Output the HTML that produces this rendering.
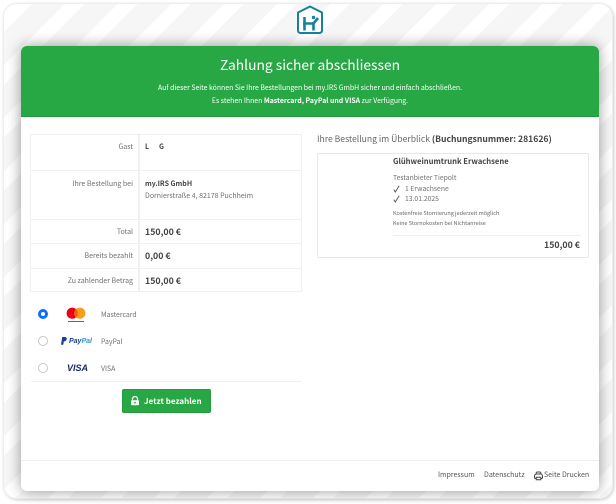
<!DOCTYPE html>
<html><head><meta charset="utf-8">
<style>
*{box-sizing:border-box}
html,body{margin:0;padding:0;width:616px;height:504px;overflow:hidden;background:#fff}
body{font-family:"Noto Sans CJK JP","Liberation Sans",sans-serif;color:#555;position:relative}
.a{position:absolute;white-space:nowrap;line-height:1}
#outer{position:absolute;left:3px;top:3px;width:610px;height:496px;border-radius:14px;border:1px solid #eeeeee;box-shadow:1px 1px 3px rgba(0,0,0,.2);overflow:hidden;
background:repeating-linear-gradient(135deg,#f6f6f6 0 5.6px,#fff 5.6px 19.6px,#f6f6f6 19.6px 37.5px)}
#inner{position:absolute;left:21px;top:46px;width:578px;height:445px;background:#fff;border-radius:6px;box-shadow:0 0 14px rgba(0,0,0,.4)}
#hd{position:absolute;left:21px;top:46px;width:578px;height:71px;background:#28a745;border-radius:6px 6px 0 0;border-bottom:1px solid #1f9a3c}
.c{text-align:center;color:#fff;left:21px;width:578px}
.line{position:absolute;background:#f0f0f0}
.r{text-align:right;left:30px;width:103px;font-size:7px;color:#6f6f6f}
.v{left:145px;font-weight:700;color:#444}
.rad{position:absolute;left:38px;width:10px;height:10px;border-radius:50%;border:1px solid #c8c8c8;background:#fff}
</style></head><body>
<div id="outer"></div>
<div id="inner"></div>
<svg class="a" style="left:296px;top:5px" width="28" height="30" viewBox="0 0 28 30"><path d="M14 1.500L26 7.500V25.500a2.500 2.500 0 0 1-2.500 2.500H4.500a2.500 2.500 0 0 1-2.500-2.500V7.500Z" fill="#fff" stroke="#17809d" stroke-width="2" stroke-linejoin="round"/><path d="M8.500 12V25.500M17.500 17V25.500M7 18.500H17.500L22 13" fill="none" stroke="#17809d" stroke-width="2.600"/><circle cx="17.500" cy="12.500" r="1.700" fill="#17809d"/></svg>
<div id="hd"></div>
<div class="a c" style="top:58px;font-size:13.8px">Zahlung sicher abschliessen</div>
<div class="a c" style="top:84px;font-size:6.9px">Auf dieser Seite können Sie Ihre Bestellungen bei my.IRS GmbH sicher und einfach abschließen.</div>
<div class="a c" style="top:97px;font-size:6.9px">Es stehen Ihnen <b>Mastercard, PayPal und VISA</b> zur Verfügung.</div>

<div style="position:absolute;left:30px;top:134px;width:272px;height:158px;border:1px solid #f0f0f0"></div>
<div class="line" style="left:138px;top:134px;width:2px;height:158px"></div>
<div class="line" style="left:30px;top:170px;width:272px;height:1px"></div>
<div class="line" style="left:30px;top:219px;width:272px;height:1px"></div>
<div class="line" style="left:30px;top:243px;width:272px;height:1px"></div>
<div class="line" style="left:30px;top:268px;width:272px;height:1px"></div>
<div class="a r" style="top:144px">Gast</div>
<div class="a" style="left:145px;top:144px;font-size:7px;font-weight:700;color:#444">L</div>
<div class="a" style="left:159px;top:144px;font-size:7px;font-weight:700;color:#444">G</div>
<div class="a r" style="top:181px">Ihre Bestellung bei</div>
<div class="a v" style="top:181px;font-size:7px">my.IRS GmbH</div>
<div class="a" style="left:145px;top:193px;font-size:7px;color:#6f6f6f">Dornierstraße 4, 82178 Puchheim</div>
<div class="a r" style="top:229px">Total</div>
<div class="a v" style="top:228px;font-size:8.800px">150,00 €</div>
<div class="a r" style="top:253px">Bereits bezahlt</div>
<div class="a v" style="top:252px;font-size:8.800px">0,00 €</div>
<div class="a r" style="top:278px">Zu zahlender Betrag</div>
<div class="a v" style="top:277px;font-size:8.800px">150,00 €</div>

<div class="a" style="left:317px;top:135px;font-size:8.600px;color:#666">Ihre Bestellung im Überblick <b style="color:#444">(Buchungsnummer: 281626)</b></div>
<div style="position:absolute;left:317px;top:153px;width:272px;height:105px;border:1px solid #e8e8e8;border-radius:2px"></div>
<div class="a" style="left:393px;top:158px;font-size:7.600px;font-weight:700;color:#444">Glühweinumtrunk Erwachsene</div>
<div class="a" style="left:393px;top:174px;font-size:6.800px;color:#6f6f6f">Testanbieter Tiepolt</div>
<svg class="a" style="left:393px;top:185px" width="7" height="8" viewBox="0 0 7 8"><path d="M.8 4.600L2.300 7 6.200.8" fill="none" stroke="#555" stroke-width=".9"/></svg>
<div class="a" style="left:405px;top:185px;font-size:6.800px;color:#6f6f6f">1 Erwachsene</div>
<svg class="a" style="left:393px;top:195px" width="7" height="8" viewBox="0 0 7 8"><path d="M.8 4.600L2.300 7 6.200.8" fill="none" stroke="#555" stroke-width=".9"/></svg>
<div class="a" style="left:405px;top:195px;font-size:6.800px;color:#6f6f6f">13.01.2025</div>
<div class="a" style="left:393px;top:211px;font-size:5.500px;color:#666">Kostenfreie Stornierung jederzeit möglich</div>
<div class="a" style="left:393px;top:221px;font-size:5.500px;color:#666">Keine Stornokosten bei Nichtanreise</div>
<div class="line" style="left:393px;top:235px;width:188px;height:1px"></div>
<div class="a" style="right:36px;top:241px;font-size:8.800px;font-weight:700;color:#444">150,00 €</div>

<div class="rad" style="top:309px;border:3px solid #0d6efd"></div>
<div class="rad" style="top:336px"></div>
<div class="rad" style="top:363px"></div>
<svg class="a" style="left:66px;top:307px" width="20" height="17" viewBox="0 0 20 17"><circle cx="6.200" cy="6.200" r="5.600" fill="#eb001b"/><circle cx="13.800" cy="6.200" r="5.600" fill="#f79e1b"/><path d="M10 2a5.600 5.600 0 0 1 0 8.400a5.600 5.600 0 0 1 0-8.400Z" fill="#ff5f00"/><rect x="2" y="14" width="16" height="1" fill="#666"/></svg>
<div class="a" style="left:101px;top:311px;font-size:6.900px;color:#6f6f6f">Mastercard</div>
<svg class="a" style="left:61px;top:337px" width="6" height="8" viewBox="0 0 6 8"><path d="M1.200 0H4a1.800 1.800 0 0 1 1.600 2.600C5 4 4 4.400 2.800 4.400L2.300 7.800H0Z" fill="#1b3f8f"/></svg>
<div class="a" style="left:69px;top:338px;font-size:7px;font-weight:700;font-style:italic;font-family:'Liberation Sans',sans-serif;color:#1b3f8f">Pay<span style="color:#2a9ad6">Pal</span></div>
<div class="a" style="left:101px;top:338px;font-size:6.900px;color:#6f6f6f">PayPal</div>
<div class="a" style="left:67px;top:364px;font-size:9px;font-weight:700;font-style:italic;font-family:'Liberation Sans',sans-serif;color:#1a2a6c">VISA</div>
<div class="a" style="left:101px;top:365px;font-size:6.900px;color:#6f6f6f">VISA</div>
<div class="line" style="left:31px;top:381px;width:271px;height:1px"></div>

<div style="position:absolute;left:122px;top:389px;width:89px;height:24px;background:#28a745;border:1px solid #249a3f;border-radius:2px"></div>
<svg class="a" style="left:130px;top:396px" width="10" height="10" viewBox="0 0 10 10"><path d="M2.500 4.500V3a2.500 2.500 0 0 1 5 0V4.500" fill="none" stroke="#fff" stroke-width="1.200"/><rect x="1" y="4.200" width="8" height="5" rx="1" fill="#fff"/><circle cx="5" cy="6.700" r=".9" fill="#28a745"/></svg>
<div class="a" style="left:144px;top:398px;font-size:8px;font-weight:700;color:#fff">Jetzt bezahlen</div>

<div class="line" style="left:21px;top:460px;width:578px;height:1px"></div>
<div class="a" style="left:438px;top:472px;font-size:7px;color:#555">Impressum</div>
<div class="a" style="left:484px;top:472px;font-size:7px;color:#555">Datenschutz</div>
<svg class="a" style="left:534px;top:471px" width="9" height="10" viewBox="0 0 9 10"><path d="M2.200 3.500V2a1 1 0 0 1 1-1H5.800a1 1 0 0 1 1 1V3.500M2 7.500H1.500a1 1 0 0 1-1-1V5A2 2 0 0 1 2.500 3H6.500A2 2 0 0 1 8.500 5V6.500a1 1 0 0 1-1 1H7M2.200 6.300H6.800V8.800H2.200Z" fill="none" stroke="#444" stroke-width="1"/></svg>
<div class="a" style="left:544px;top:472px;font-size:7px;color:#555">Seite Drucken</div>
</body></html>
